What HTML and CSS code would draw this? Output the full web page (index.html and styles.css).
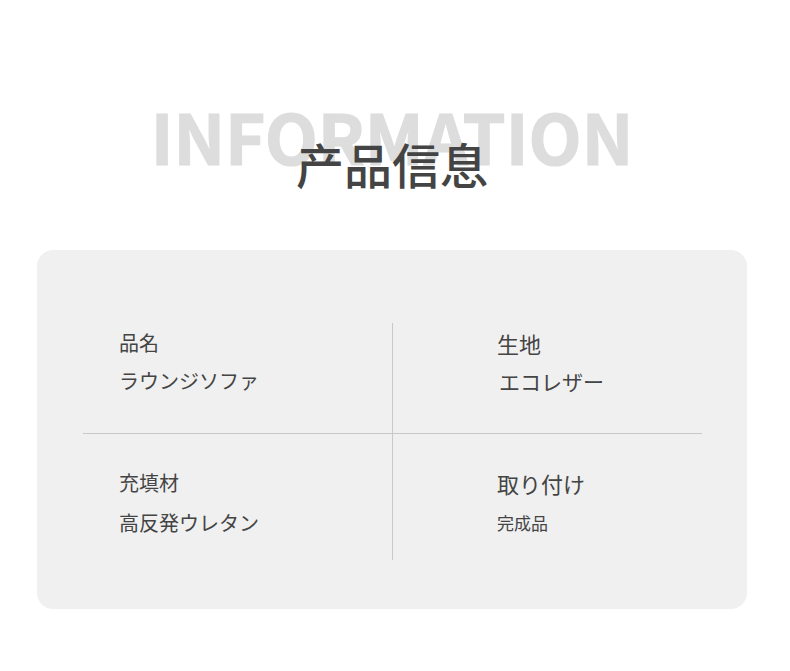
FILE: index.html
```html
<!DOCTYPE html>
<html lang="ja">
<head>
<meta charset="utf-8">
<link rel="stylesheet" href="styles.css">
</head>
<body>
<header class="head">
  <div class="en">INFORMATION</div>
  <h1 class="zh">产品信息</h1>
</header>
<section class="card">
  <div class="grid">
    <div class="cell c1 r1">
      <div class="label">品名</div>
      <div class="value">ラウンジソファ</div>
    </div>
    <div class="cell c2 r1">
      <div class="label big">生地</div>
      <div class="value mid">エコレザー</div>
    </div>
    <div class="cell c1 r2">
      <div class="label">充填材</div>
      <div class="value lower">高反発ウレタン</div>
    </div>
    <div class="cell c2 r2">
      <div class="label big">取り付け</div>
      <div class="value small lower">完成品</div>
    </div>
  </div>
</section>
</body>
</html>
```
FILE: styles.css
```css
html, body {
  margin: 0;
  padding: 0;
  background: #ffffff;
}
body {
  font-family: "Noto Sans CJK JP", "Noto Sans CJK SC", "Noto Sans", sans-serif;
  color: #444444;
  width: 790px;
  height: 671px;
  overflow: hidden;
}
.head {
  padding: 101px 6px 0 0;
  text-align: center;
}
.en {
  font-family: "Noto Sans CJK SC", sans-serif;
  font-weight: 700;
  font-size: 69px;
  line-height: 69px;
  color: #dddddd;
  -webkit-text-stroke: 1.2px #dddddd;
  letter-spacing: 0;
}
.zh {
  margin: -31px 0 0;
  font-family: "Noto Sans CJK SC", sans-serif;
  font-weight: 500;
  font-size: 48px;
  line-height: 48px;
  color: #444444;
  position: relative;
}
.card {
  margin: 63px 43px 0 37px;
  background: #f0f0f0;
  border-radius: 16px;
  padding: 73px 45px 49px 46px;
}
.grid {
  display: grid;
  grid-template-columns: 310px 309px;
  grid-template-rows: 111px 126px;
}
.cell {
  box-sizing: border-box;
}
.c1 {
  border-right: 1px solid #c8c8c8;
  padding-left: 36px;
}
.c2 {
  padding-left: 104px;
}
.r1 {
  border-bottom: 1px solid #c8c8c8;
  padding-top: 5px;
}
.r2 {
  padding-top: 34px;
}
.label {
  font-size: 20px;
  line-height: 30px;
}
.label.big {
  font-size: 22px;
}
.value {
  margin-top: 8px;
  font-size: 20px;
  line-height: 30px;
}
.value.lower {
  margin-top: 10px;
}
.value.mid {
  font-size: 21px;
  margin-left: 2px;
}
.value.small {
  font-size: 17px;
}
```
